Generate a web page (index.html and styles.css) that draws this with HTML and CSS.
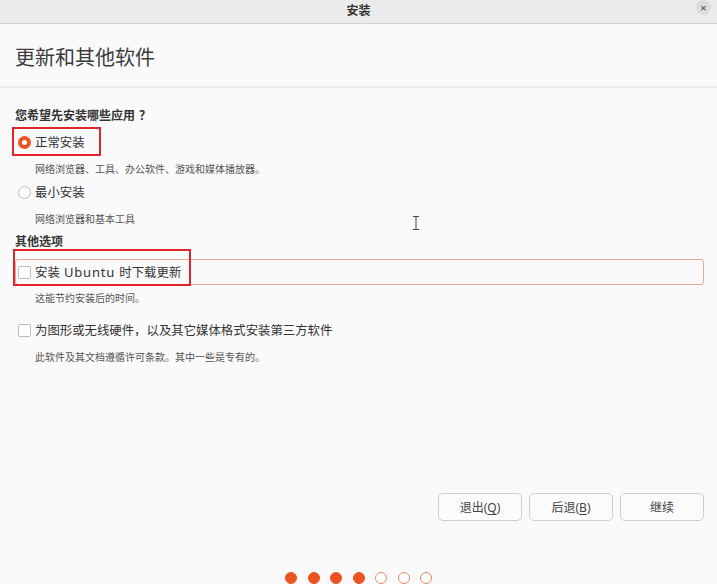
FILE: index.html
```html
<!DOCTYPE html>
<html lang="zh-CN">
<head>
    <meta charset="UTF-8">
    <meta name="viewport" content="width=device-width, initial-scale=1.0">
    <title>安装</title>

    <link rel="stylesheet" href="styles.css">

</head>
<body>

    <div class="window">
        <div class="titlebar">
            <span class="title">安装</span>
            <span class="close">×</span>
        </div>

        <div class="header">
            <h1>更新和其他软件</h1>
        </div>

        <main class="content">
            <div class="section-title first">您希望先安装哪些应用<span class="qmark">？</span></div>

            <div class="option row-normal">
                <span class="radio checked"></span>
                <span class="label">正常安装</span>
                <div class="mark mark-radio"></div>
            </div>
            <div class="desc d1">网络浏览器、工具、办公软件、游戏和媒体播放器。</div>

            <div class="option row-minimal">
                <span class="radio"></span>
                <span class="label">最小安装</span>
            </div>
            <div class="desc d2">网络浏览器和基本工具</div>

            <div class="section-title other">其他选项</div>

            <div class="option focused">
                <span class="check"></span>
                <span class="label spaced">安装 <span class="latin">Ubuntu</span> 时下载更新</span>
                <div class="mark mark-check"></div>
            </div>
            <div class="desc d3">这能节约安装后的时间。</div>

            <div class="option row-third">
                <span class="check"></span>
                <span class="label">为图形或无线硬件，以及其它媒体格式安装第三方软件</span>
            </div>
            <div class="desc d4">此软件及其文档遵循许可条款。其中一些是专有的。</div>

            <!-- mouse pointer -->
            <svg class="cursor" width="8" height="14" viewBox="0 0 8 14">
                <path d="M1 0.5h6M4 0.5v13M1 13.5h6" stroke="#444" stroke-width="1" fill="none"/>
            </svg>
        </main>

        <div class="actions">
            <button>退出(<u>Q</u>)</button>
            <button>后退(<u>B</u>)</button>
            <button>继续</button>
        </div>

        <div class="steps">
            <span class="dot done"></span>
            <span class="dot done"></span>
            <span class="dot done"></span>
            <span class="dot done"></span>
            <span class="dot"></span>
            <span class="dot"></span>
            <span class="dot"></span>
        </div>
    </div>

</body>
</html>
```

FILE: styles.css
```css
*{
    margin: 0;padding:0;
    box-sizing: border-box;
}

body{
    font-family: "Noto Sans", "Noto Sans CJK SC", sans-serif;
    background:#fafafa;
    color:#333;
}

.window{
    height:584px;
    display:flex;
    flex-direction: column;
    overflow:hidden;
}

.titlebar{
    height:24px;
    background:#ebebeb;
    border-bottom:1px solid #d2d2d2;
    display:flex;
    justify-content:center;
    align-items:center;
    position:relative;
}

.title{
    font-size:12px;
    font-weight:bold;
    color:#333;
    margin-top:-4px;
}

.close{
    position:absolute;
    right:6px;top:0;
    width:15px;height:15px;
    border-radius:50%;
    background:#dcdcdc;
    font-size:11px;
    line-height:15px;
    text-align:center;
    color:#444;
}

.header{
    height:64px;
    border-bottom:2px solid #ededed;
    display:flex;
    align-items:center;
    padding-left:15px;
}

.header h1{
    font-size:20px;
    font-weight:normal;
    color:#3c3c3c;
    margin-top:2px;
}

.content{
    position:relative;
    padding-left:15px;
    display:flex;
    flex-direction: column;
}

.section-title{
    font-size:12px;
    font-weight:bold;
    line-height:20px;
    color:#333;
}

.section-title.first{
    margin-top:18px;
}

.qmark{
    padding-left:4px;
}

.section-title.other{ margin-top:3px }

.option{
    position:relative;
    display:flex;
    align-items:center;
    gap:4px;
    height:20px;
}

.label{
    font-size:12.4px;
    color:#333;
}

.label.spaced{
    word-spacing:1px;
}

.latin{
    font-size:13px;
    letter-spacing:0.8px;
}

.desc{
    font-size:10px;
    line-height:20px;
    color:#555;
    padding-left:20px;
}

.row-normal{ margin-top:6px }
.d1{ margin-top:7px }
.row-minimal{ margin-top:3px }
.d2{ margin-top:7px }
.d3{ margin-top:3px }
.row-third{ margin-top:12px }
.d4{ margin-top:7px }

.radio{
    width:13px;height:13px;
    margin-left:3px;
    border-radius:50%;
    border:1px solid #bdbdbd;
    background:#fff;
    display:inline-block;
}

.radio.checked{
    border:none;
    background:#e95420;
    display:flex;
    justify-content:center;
    align-items:center;
}

.radio.checked::after{
    content:"";
    width:5px;height:5px;
    border-radius:50%;
    background:#fff;
}

.check{
    width:13px;height:13px;
    margin-left:3px;
    border:1px solid #bdbdbd;
    border-radius:2px;
    background:#fff;
    display:inline-block;
}

.focused{
    height:26px;
    margin-top:7px;
    margin-right:13px;
    border:1px solid #f2a49a;
    border-radius:3px;
    padding-left:2px;
}

.focused .check{ margin-left:0 }

/* red annotation boxes */
.mark{
    position:absolute;
    border:2px solid #e0262c;
}

.mark-radio{
    left:-3px;top:-5px;
    width:89px;height:29px;
}

.mark-check{
    left:-3px;top:-11px;
    width:178px;height:37px;
}

.cursor{
    position:absolute;
    left:412px;top:128px;
}

.actions{
    margin-top:auto;
    display:flex;
    justify-content:flex-end;
    gap:7px;
    padding-right:13px;
}

.actions button{
    width:84px;height:28px;
    font-family: "Noto Sans", "Noto Sans CJK SC", sans-serif;
    font-size:12px;
    color:#444;
    background:#fbfbfb;
    border:1px solid #cfcfcf;
    border-radius:5px;
}

.actions u{
    text-underline-offset:2px;
}

.steps{
    margin-top:51px;
    height:12px;
    display:flex;
    justify-content:center;
    gap:10.5px;
}

.dot{
    width:12px;height:12px;
    border-radius:50%;
    border:1px solid #e3876a;
    background:#fff;
}

.dot.done{
    background:#e95420;
    border-color:#e95420;
}
```
